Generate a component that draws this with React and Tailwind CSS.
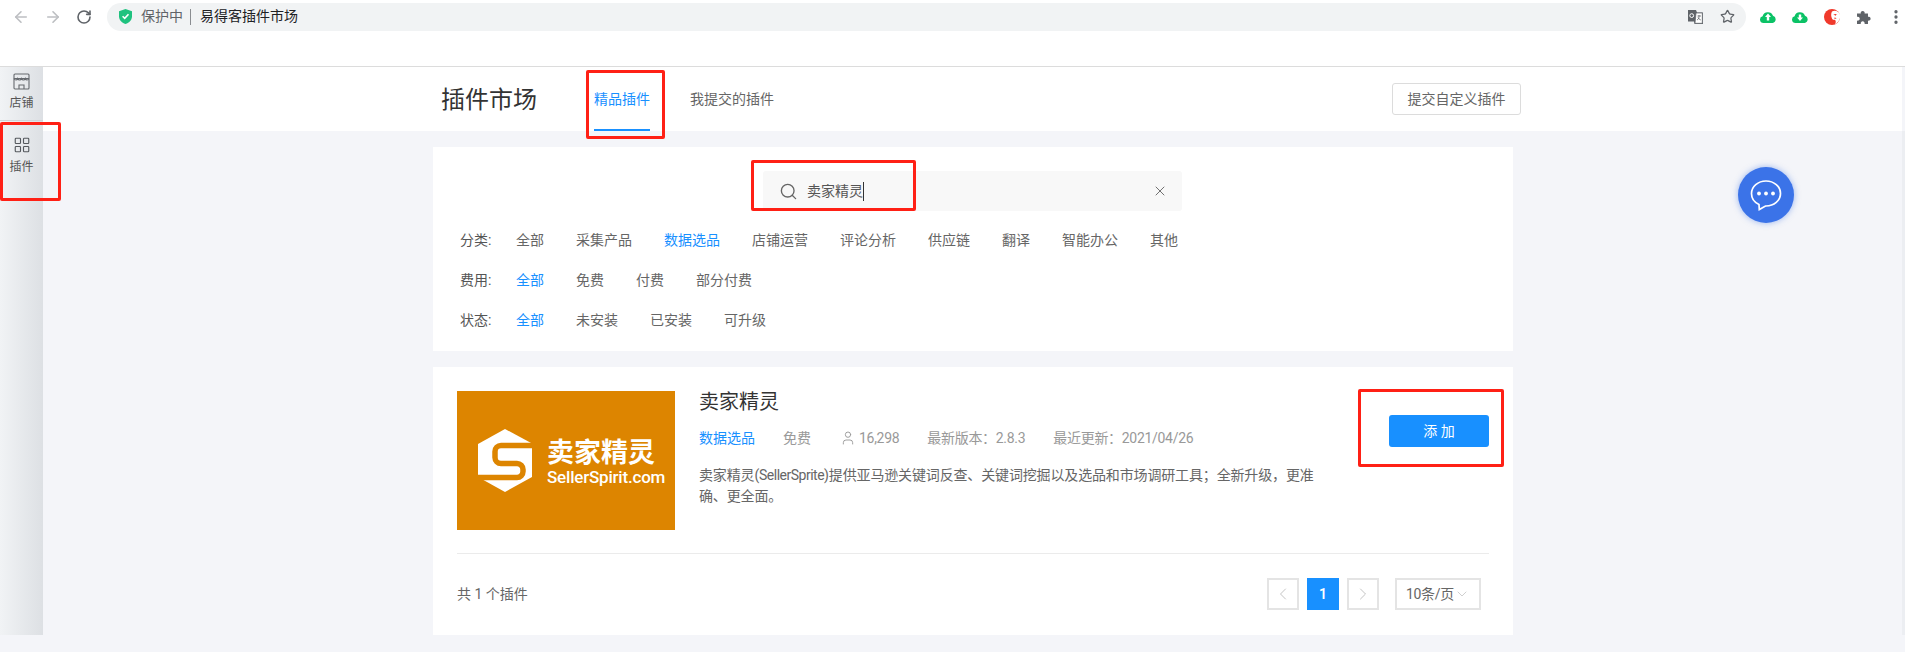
import React from 'react'
import { ArrowLeft, ArrowRight, RotateCw, Star, Search, X, User, ChevronLeft, ChevronRight, ChevronDown, EllipsisVertical, LayoutGrid } from 'lucide-react'

const filters = [
  { label: '分类:', active: '数据选品', items: ['全部', '采集产品', '数据选品', '店铺运营', '评论分析', '供应链', '翻译', '智能办公', '其他'] },
  { label: '费用:', active: '全部', items: ['全部', '免费', '付费', '部分付费'] },
  { label: '状态:', active: '全部', items: ['全部', '未安装', '已安装', '可升级'] },
]

function CloudIcon({ down }) {
  return (
    <svg width="16" height="12" viewBox="0 0 16 12">
      <path d="M3.4 12A3.4 3.4 0 0 1 2.6 5.3 5.5 5.5 0 0 1 13 4.8 3.7 3.7 0 0 1 12.6 12Z" fill="#0bc266" />
      <path d={down ? 'M6.8 3.5h2.4v3h1.8L8 10 5 6.5h1.8Z' : 'M8 2.5l3 3.6H9.2v3.4H6.8V6.1H5Z'} fill="#fff" />
    </svg>
  )
}

function ChromeBar() {
  return (
    <div className="flex items-center h-[67px] pb-[35px] pt-[2px] bg-white border-b border-[#dcdcdc] text-[#5f6368]">
      <ArrowLeft className="ml-[12px] w-[18px] h-[18px] text-[#bdbfc2]" strokeWidth={2.2} />
      <ArrowRight className="ml-[14px] w-[18px] h-[18px] text-[#bdbfc2]" strokeWidth={2.2} />
      <RotateCw className="ml-[14px] w-[16px] h-[16px] text-[#5f6368]" strokeWidth={2.4} />
      <div className="ml-[15px] w-[1641px] h-[28px] rounded-full bg-[#f1f3f4] flex items-center">
        <svg className="ml-[12px]" width="13" height="15" viewBox="0 0 13 15">
          <path d="M6.5 0 13 2.2v5c0 3.6-2.6 6.4-6.5 7.8C2.6 13.600 0 10.800 0 7.200v-5Z" fill="#1fc27f" />
          <path d="M3.6 7.300 5.700 9.400 9.500 5.300" fill="none" stroke="#fff" strokeWidth="1.6" />
        </svg>
        <span className="ml-[9px] text-[14px]">保护中</span>
        <span className="ml-[7px] w-px h-[16px] bg-[#8a8d91]" />
        <span className="ml-[9px] text-[14px] text-[#202124]">易得客插件市场</span>
        <svg className="ml-auto" width="15" height="14" viewBox="0 0 15 14">
          <path d="M0 0h8l1 2.500h6V14H6.500L6 11.500H0Z" fill="#5f6368" />
          <path d="M8 3h6.300v10.300H7Z" fill="#fff" stroke="#5f6368" strokeWidth=".7" />
          <path d="M9.500 6h3.500M11 5v1.500c0 2-1 3-2 3.500M10 7.500c.5 1.200 1.500 2 2.800 2.500" fill="none" stroke="#5f6368" strokeWidth=".8" />
          <circle cx="3.700" cy="5.600" r="1.900" fill="none" stroke="#fff" strokeWidth="1" />
        </svg>
        <Star className="ml-[17px] mr-[11px] w-[15px] h-[15px]" strokeWidth={2} />
      </div>
      <div className="ml-[14px]"><CloudIcon /></div>
      <div className="ml-[16px]"><CloudIcon down /></div>
      <svg className="ml-[16px]" width="16" height="16" viewBox="0 0 16 16">
        <circle cx="8" cy="8" r="8" fill="#f0392b" />
        <path d="M8 2.500C11 .8 14.500 2 16 5.500V9c-.8 2.800-2.500 5-5 6.500 1-1.800 1-3.500 0-4.700-1.200.4-2.500 0-3-1.300C7 7.500 6.800 4.500 8 2.500Z" fill="#fff" />
        <path d="M9.300 5.800c1.200-1.200 3-1.200 4.200-.2-1 0-1.700.5-2 1.300-.5-.6-1.300-1-2.200-1.100Z" fill="#f0392b" />
        <path d="M10.500 8.500c1 0 1.800.6 2.200 1.500-.8-.3-1.500-.2-2.200.2Z" fill="#f0392b" />
      </svg>
      <svg className="ml-[17px]" width="14" height="14" viewBox="0 0 14 14">
        <path d="M0 3.500h3.800a2 2 0 1 1 3.800 0h3.400v3.300a2 2 0 1 1 0 3.800V14H7.600a2 2 0 1 0-3.800 0H0v-3.500a2 2 0 1 0 0-3.700Z" fill="#5f6368" />
      </svg>
      <EllipsisVertical className="ml-[16px] w-[18px] h-[18px]" strokeWidth={2.4} />
    </div>
  )
}

function Sidebar() {
  return (
    <div className="w-[43px] shrink-0 bg-gradient-to-r from-[#f1f3f5] to-[#dde0e4] text-[#555]">
      <div className="h-[54px] pt-[6px] flex flex-col items-center border-b border-[#cfd2d6]">
        <svg width="17" height="17" viewBox="0 0 17 17" fill="none" stroke="#666a6f" strokeWidth="1.100">
          <rect x="1" y="1" width="15" height="15" rx="1" />
          <path d="M1 5.500h15M1 5.500c1 2 3 2 3.700 0 .8 2 3 2 3.800 0 .8 2 3 2 3.800 0 .7 2 2.700 2 3.700 0M6 16v-4h5v4" />
        </svg>
        <span className="mt-[5px] text-[12px] leading-[16px]">店铺</span>
      </div>
      <div className="pt-[15px] flex flex-col items-center">
        <LayoutGrid className="w-[18px] h-[18px] text-[#55595e]" strokeWidth={1.5} />
        <span className="mt-[5px] text-[12px] leading-[16px]">插件</span>
      </div>
    </div>
  )
}

function Logo() {
  return (
    <div className="w-[218px] h-[139px] shrink-0 bg-[#dd8500] flex items-center pl-[21px] text-white">
      <svg width="57" height="63" viewBox="8 9 57 63">
        <path d="M35 9 62 23.500V57L35 72 8 57V24Z" fill="#fff" />
        <path d="M66 25.500H31a6 6 0 0 0-6 6v6a6 6 0 0 0 6 6h16a6 6 0 0 1 6 6v2a6 6 0 0 1-6 6H4" fill="none" stroke="#dd8500" strokeWidth="5.500" />
      </svg>
      <div className="ml-[12px] mt-[4px] flex flex-col">
        <span className="text-[27px] leading-[30px] font-bold">卖家精灵</span>
        <span className="mt-[-1px] text-[17px] leading-[20px] font-medium tracking-[-0.2px]">SellerSpirit.com</span>
      </div>
    </div>
  )
}

function PageBox({ children, className }) {
  return <div className={`w-[32px] h-[32px] flex items-center justify-center border-2 border-[#e4e4e4] text-[#c4c4c4] ${className || ''}`}>{children}</div>
}

export default function App() {
  return (
    <div className="relative w-[1905px] h-[652px] overflow-hidden bg-[#f4f5f9] font-['Roboto','Noto_Sans_CJK_SC',sans-serif]">
      <ChromeBar />
      <div className="flex">
        <Sidebar />
        <div className="flex-1 min-w-0">
          {/* Title bar */}
          <div className="h-[64px] bg-white flex pl-[398px] pr-[381px]">
            <h1 className="mt-[16px] text-[24px] leading-[34px] font-normal text-[#333]">插件市场</h1>
            <div className="ml-[57px] h-full flex flex-col justify-between">
              <span className="mt-[22px] text-[14px] leading-[20px] text-[#1890ff]">精品插件</span>
              <span className="h-[2px] bg-[#1890ff]" />
            </div>
            <span className="ml-[40px] mt-[22px] text-[14px] leading-[20px] text-[#666]">我提交的插件</span>
            <button className="ml-auto mt-[16px] w-[129px] h-[32px] rounded-[3px] border border-[#dcdcdc] text-[14px] text-[#666] bg-white">提交自定义插件</button>
          </div>

          <div className="pl-[390px] pt-[16px]">
            {/* Search and filters */}
            <div className="w-[1080px] h-[204px] bg-white pt-[24px] px-[26px]">
              <div className="ml-[304px] w-[419px] h-[40px] rounded-[3px] bg-[#f8f8f8] flex items-center pl-[16px] pr-[14px] text-[#666]">
                <Search className="w-[19px] h-[19px]" strokeWidth={1.7} />
                <span className="ml-[9px] text-[14px] text-[#555] border-r border-[#333] leading-[19px]">卖家精灵</span>
                <X className="ml-auto w-[16px] h-[16px]" strokeWidth={1.4} />
              </div>
              <div className="mt-[9px] flex flex-col">
                {filters.map((row) => (
                  <div key={row.label} className="h-[40px] flex items-center text-[14px]">
                    <span className="w-[57px] pl-px text-[#555]">{row.label}</span>
                    <div className="flex gap-[32px]">
                      {row.items.map((item) => (
                        <span key={item} className={item === row.active ? 'text-[#1890ff]' : 'text-[#666]'}>{item}</span>
                      ))}
                    </div>
                  </div>
                ))}
              </div>
            </div>

            {/* Result card */}
            <div className="mt-[16px] w-[1080px] h-[268px] bg-white px-[24px] pt-[24px]">
              <div className="flex h-[163px] border-b border-[#ebebeb]">
                <Logo />
                <div className="ml-[24px] w-[640px]">
                  <h2 className="text-[20px] leading-[24px] mt-[-1px] font-normal text-[#333]">卖家精灵</h2>
                  <div className="mt-[14px] flex items-center text-[14px] leading-[20px] text-[#999]">
                    <span className="text-[#1890ff]">数据选品</span>
                    <span className="ml-[28px]">免费</span>
                    <User className="ml-[29px] w-[16px] h-[16px]" strokeWidth={1.4} />
                    <span className="ml-[3px] tracking-[-0.3px]">16,298</span>
                    <span className="ml-[28px] tracking-[-0.3px]">{'最新版本\uFF1A2.8.3'}</span>
                    <span className="ml-[28px] tracking-[-0.3px]">{'最近更新\uFF1A2021/04/26'}</span>
                  </div>
                  <p className="mt-[17px] text-[14px] leading-[21px] text-[#666] tracking-[-0.15px]">
                    卖家精灵(<span className="tracking-[-0.5px]">SellerSprite</span>){'提供亚马逊关键词反查、关键词挖掘以及选品和市场调研工具\uFF1B全新升级\uFF0C更准'}<br />确、更全面。
                  </p>
                </div>
                <button className="ml-auto mt-[24px] w-[100px] h-[32px] rounded-[3px] bg-[#1890ff] text-white text-[14px]">添 加</button>
              </div>
              <div className="pt-[24px] flex items-center pr-[8px]">
                <span className="text-[14px] text-[#666]">共 1 个插件</span>
                <div className="ml-auto flex items-center gap-[8px]">
                  <PageBox><ChevronLeft className="w-[20px] h-[20px]" strokeWidth={1.2} /></PageBox>
                  <div className="w-[32px] h-[32px] flex items-center justify-center bg-[#1890ff] text-white text-[14px] font-semibold">1</div>
                  <PageBox><ChevronRight className="w-[20px] h-[20px]" strokeWidth={1.2} /></PageBox>
                  <div className="ml-[8px] w-[86px] h-[32px] flex items-center justify-center border-2 border-[#e4e4e4] text-[14px] text-[#666] tracking-[-0.3px]">
                    10条/页
                    <ChevronDown className="w-[16px] h-[16px] text-[#c4c4c4]" strokeWidth={1.2} />
                  </div>
                </div>
              </div>
            </div>
          </div>
        </div>
        <div className="w-[3px] shrink-0 mt-[64px] bg-[#eceef2]" />
      </div>

      {/* Floating chat button */}
      <div className="absolute left-[1738px] top-[167px] w-[56px] h-[56px] rounded-full bg-[#3b73e8] shadow-[0_0_6px_rgba(59,115,232,0.5)] flex items-center justify-center">
        <svg width="32" height="32" viewBox="0 0 32 32" fill="none">
          <path d="M16 2C8 2 1.500 7.500 1.500 14.500c0 5 3.200 9 7.500 11l.3 5L15.500 27h.5c8 0 14.500-5.500 14.500-12.500S24 2 16 2Z" stroke="#fff" strokeWidth="1.700" />
          <circle cx="9" cy="14.500" r="1.900" fill="#fff" />
          <circle cx="16" cy="14.500" r="1.900" fill="#fff" />
          <circle cx="23" cy="14.500" r="1.900" fill="#fff" />
        </svg>
      </div>

      {/* Red annotation boxes drawn over the screenshot */}
      <div className="absolute left-0 top-[122px] w-[61px] h-[79px] border-[3px] border-[#ff2015] rounded-[2px]" />
      <div className="absolute left-[586px] top-[70px] w-[79px] h-[69px] border-[3px] border-[#ff2015] rounded-[2px]" />
      <div className="absolute left-[751px] top-[160px] w-[165px] h-[51px] border-[3px] border-[#ff2015] rounded-[2px]" />
      <div className="absolute left-[1358px] top-[389px] w-[146px] h-[78px] border-[3px] border-[#ff2015] rounded-[2px]" />
    </div>
  )
}
